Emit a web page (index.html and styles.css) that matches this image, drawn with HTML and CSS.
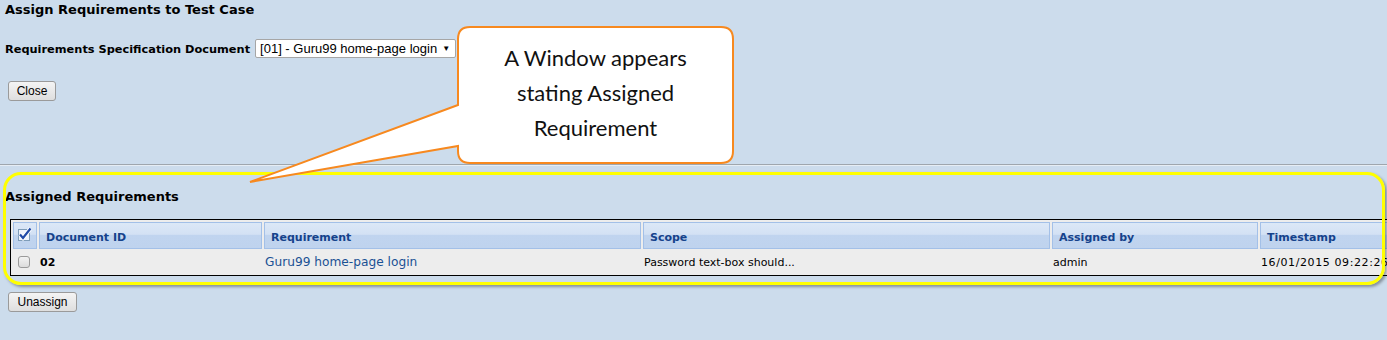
FILE: index.html
```html
<!DOCTYPE html>
<html lang="en">
<head>
    <meta charset="UTF-8">
    <title>Assign Requirements to Test Case</title>
    <link rel="stylesheet" href="styles.css">
</head>
<body>

    <!-- Top: choose spec document -->
    <div class="top">
        <h1 class="title">Assign Requirements to Test Case</h1>
        <div class="spec-row">
            <label class="spec-label">Requirements Specification Document</label>
            <span class="select">[01] - Guru99 home-page login <span class="arrow">&#9660;</span></span>
        </div>
        <button class="btn btn-close">Close</button>
    </div>

    <hr class="divider">

    <!-- Assigned list -->
    <div class="assigned">
        <h2 class="subtitle">Assigned Requirements</h2>
        <table class="grid">
            <thead>
                <tr>
                    <th class="col-check">
                        <svg width="14" height="14" viewBox="0 0 14 14">
                            <rect x="0.5" y="2.5" width="11" height="11" fill="#eef3fb" stroke="#7f9db9"/>
                            <path d="M2 7.5 L5 11 L12.5 1.5" fill="none" stroke="#fff" stroke-width="4"/>
                            <path d="M2 7.5 L5 11 L12.5 1.5" fill="none" stroke="#1f4aa8" stroke-width="2.2"/>
                        </svg>
                    </th>
                    <th class="col-id">Document ID</th>
                    <th class="col-req">Requirement</th>
                    <th class="col-scope">Scope</th>
                    <th class="col-by">Assigned by</th>
                    <th class="col-time">Timestamp</th>
                </tr>
            </thead>
            <tbody>
                <tr>
                    <td class="col-check"><span class="box"></span></td>
                    <td class="doc-id">02</td>
                    <td><a class="req-link" href="#">Guru99 home-page login</a></td>
                    <td>Password text-box should...</td>
                    <td>admin</td>
                    <td class="stamp">16/01/2015 09:22:26</td>
                </tr>
            </tbody>
        </table>
        <button class="btn btn-unassign">Unassign</button>
    </div>

    <!-- annotation overlays -->
    <div class="highlight"></div>

    <div class="callout">
        <svg class="callout-shape" width="500" height="175" viewBox="245 20 500 175">
            <path d="M470 27 H721 Q733 27 733 39 V151 Q733 163 721 163 H470 Q458 163 458 151 V146 L250 182 L458 105 V39 Q458 27 470 27 Z"
                  fill="#fff" stroke="#f7891f" stroke-width="2"/>
        </svg>
        <p class="callout-text">A Window appears<br>stating Assigned<br>Requirement</p>
    </div>

</body>
</html>
```

FILE: styles.css
```css
* {
    box-sizing: border-box;
}

body {
    margin: 0;
    background-color: #ccdcec;
    font-family: 'DejaVu Sans', Tahoma, sans-serif;
    font-size: 11px;
    color: #000;
    overflow: hidden;
    position: relative;
    height: 340px;
}

.top {
    padding: 1px 5px 0;
}

.title {
    font-size: 13px;
    font-weight: bold;
    margin: 0;
    line-height: 17px;
}

.spec-row {
    display: flex;
    align-items: center;
    gap: 5px;
    margin-top: 21px;
}

.spec-label {
    font-weight: bold;
    font-size: 11.35px;
}

.select {
    display: inline-flex;
    align-items: center;
    justify-content: space-between;
    width: 201px;
    height: 19px;
    padding: 0 5px 0 4px;
    background: #fff;
    border: 1px solid #a6a6a6;
    border-radius: 2px;
    font-family: 'Liberation Sans', Arial, sans-serif;
    font-size: 13px;
}

.arrow {
    font-size: 8px;
}

.btn {
    font-family: 'Liberation Sans', Arial, sans-serif;
    font-size: 12px;
    height: 20px;
    padding: 0 6px;
    color: #000;
    background: linear-gradient(#f4f4f4, #dedede);
    border: 1px solid #9a9a9a;
    border-radius: 3px;
}

.btn-close {
    margin: 23px 0 0 3px;
    width: 48px;
}

.divider {
    margin: 63px 0 0;
    border: 0;
    border-top: 1px solid #9fa6ad;
    border-bottom: 1px solid #e6edf4;
}

.assigned {
    padding: 0 0 0 5px;
}

.subtitle {
    font-size: 13px;
    font-weight: bold;
    margin: 22px 0 0;
    line-height: 17px;
}

.grid {
    margin: 14px 0 0 5px;
    width: 1420px;
    border-collapse: separate;
    border-spacing: 2px;
    border: 1px solid #000;
    background: #ededed;
    table-layout: fixed;
}

.grid th {
    height: 27px;
    padding: 3px 6px 0;
    text-align: left;
    color: #15428b;
    font-weight: bold;
    background: linear-gradient(#dce8f7 0%, #d3e1f4 45%, #c0d4ef 50%, #bfd3ee 100%);
    border: 1px solid #a3c0e8;
    white-space: nowrap;
}

.grid td {
    height: 22px;
    padding: 0 1px;
    white-space: nowrap;
    overflow: hidden;
}

.grid .col-check {
    width: 24px;
    padding: 0 4px;
}

.col-id { width: 223px; }
.col-req { width: 377px; }
.col-scope { width: 407px; }
.col-by { width: 206px; }

.doc-id {
    font-weight: bold;
    font-size: 11px;
}

.box {
    display: block;
    width: 12px;
    height: 12px;
    margin-left: 1px;
    border: 1px solid #9a9a9a;
    border-radius: 3px;
    background: linear-gradient(#f2f2f2, #dcdcdc);
}

.req-link {
    color: #1a5194;
    font-size: 12.2px;
    text-decoration: none;
}

.stamp {
    letter-spacing: 0.6px;
}

.btn-unassign {
    margin: 16px 0 0 3px;
    width: 69px;
}

.highlight {
    position: absolute;
    left: 3px;
    top: 172px;
    width: 1382px;
    height: 113px;
    border: 3px solid #ffff00;
    border-radius: 18px;
    box-shadow: 2px 2px 3px rgba(0, 0, 0, 0.35);
    pointer-events: none;
}

.callout {
    position: absolute;
    left: 245px;
    top: 20px;
    width: 500px;
    height: 175px;
}

.callout-shape {
    display: block;
}

.callout-text {
    position: absolute;
    left: 213px;
    top: 20px;
    width: 275px;
    margin: 0;
    text-align: center;
    font-family: 'Lato', sans-serif;
    font-size: 22px;
    line-height: 35px;
    color: #111;
}
```
